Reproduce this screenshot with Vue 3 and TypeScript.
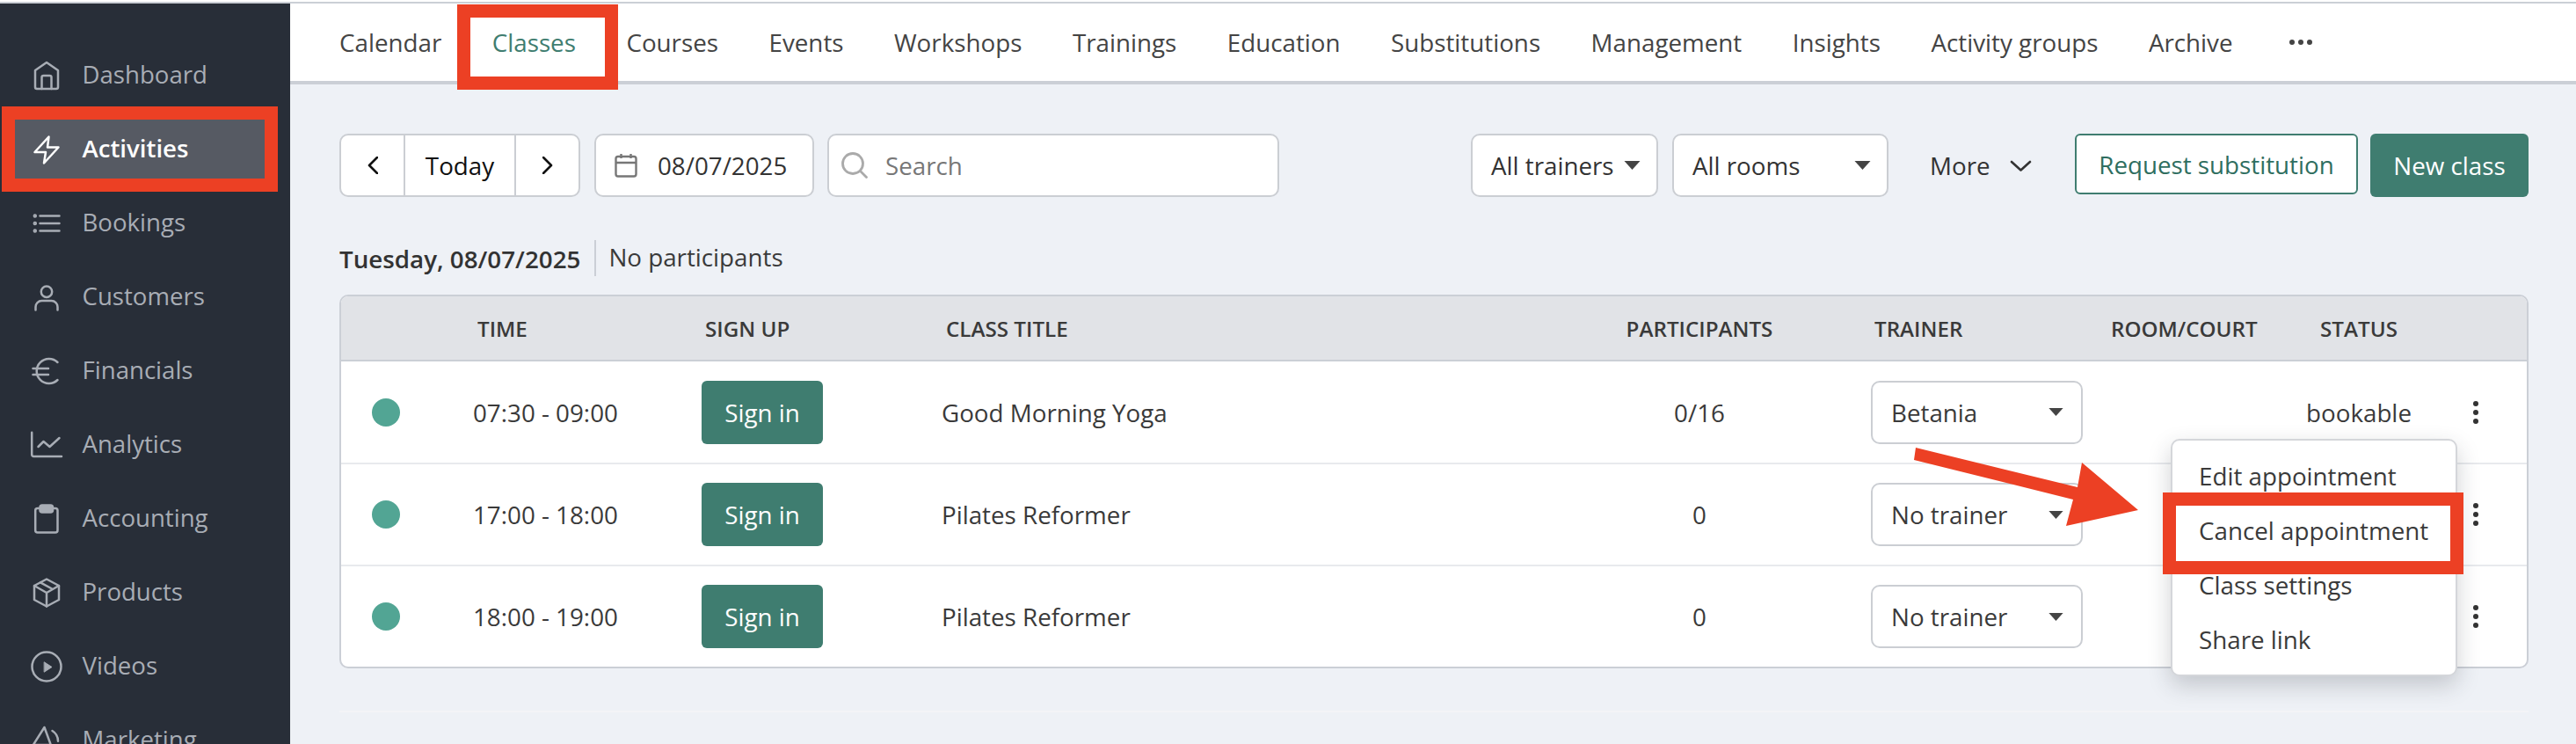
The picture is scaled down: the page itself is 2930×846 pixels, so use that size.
<script setup lang="ts">
interface SideItem { label: string; icon: string; active?: boolean }
interface ClassRow { time: string; title: string; count: string; trainer: string; status: string }

const sideItems: SideItem[] = [
  { label: 'Dashboard', icon: 'home' },
  { label: 'Activities', icon: 'bolt', active: true },
  { label: 'Bookings', icon: 'list' },
  { label: 'Customers', icon: 'user' },
  { label: 'Financials', icon: 'euro' },
  { label: 'Analytics', icon: 'chart' },
  { label: 'Accounting', icon: 'clip' },
  { label: 'Products', icon: 'box' },
  { label: 'Videos', icon: 'play' },
  { label: 'Marketing', icon: 'mega' },
]
const tabs: string[] = ['Calendar', 'Classes', 'Courses', 'Events', 'Workshops', 'Trainings', 'Education', 'Substitutions', 'Management', 'Insights', 'Activity groups', 'Archive']
const rows: ClassRow[] = [
  { time: '07:30 - 09:00', title: 'Good Morning Yoga', count: '0/16', trainer: 'Betania', status: 'bookable' },
  { time: '17:00 - 18:00', title: 'Pilates Reformer', count: '0', trainer: 'No trainer', status: '' },
  { time: '18:00 - 19:00', title: 'Pilates Reformer', count: '0', trainer: 'No trainer', status: '' },
]
const menu: string[] = ['Edit appointment', 'Cancel appointment', 'Class settings', 'Share link']
</script>

<template>
  <div class="page">
    <div class="topline"></div>
    <div class="shell">
      <aside class="sidebar">
        <div v-for="item in sideItems" :key="item.label" class="side-item" :class="{ active: item.active }">
          <svg class="side-icon" viewBox="0 0 40 40" fill="none" stroke="currentColor" stroke-width="2.5" stroke-linecap="round" stroke-linejoin="round">
            <template v-if="item.icon === 'home'">
              <path d="M7 14 L20 5 L33 14 V33 a2 2 0 0 1-2 2 H9 a2 2 0 0 1-2-2 Z" />
              <path d="M14.5 35 V22 a2 2 0 0 1 2-2 h7 a2 2 0 0 1 2 2 V35" />
            </template>
            <path v-else-if="item.icon === 'bolt'" d="M22.5 5.5 L6.5 23 H19 L17 35.5 L33.5 17.5 H21 Z" />
            <template v-else-if="item.icon === 'list'">
              <path d="M12.5 11.5 H34.5 M12.5 20 H34.5 M12.5 28.5 H34.5" />
              <circle cx="6.8" cy="11.5" r="1" /><circle cx="6.8" cy="20" r="1" /><circle cx="6.8" cy="28.5" r="1" />
            </template>
            <template v-else-if="item.icon === 'user'">
              <circle cx="20" cy="13.7" r="6.2" />
              <path d="M7.5 34.5 V31 a7 7 0 0 1 7-7 h11 a7 7 0 0 1 7 7 v3.5" />
            </template>
            <template v-else-if="item.icon === 'euro'">
              <path d="M32.5 10 A14 14 0 1 0 32.5 30" />
              <path d="M4.5 17 H22 M4.5 24 H22" />
            </template>
            <template v-else-if="item.icon === 'chart'">
              <path d="M3.2 5.7 V31 a2 2 0 0 0 2 2 H37" />
              <path d="M10.5 22 L16.5 16 L23.5 22 L34.5 12" />
            </template>
            <template v-else-if="item.icon === 'clip'">
              <rect x="7.2" y="8" width="25.3" height="27.5" rx="2.5" />
              <rect x="12.5" y="4.5" width="14.5" height="8" rx="2.5" fill="currentColor" />
            </template>
            <template v-else-if="item.icon === 'box'">
              <path d="M20 4.5 L34 12 V28 L20 35.5 L6 28 V12 Z" />
              <path d="M6 12 L20 20 L34 12 M20 20 V35.5 M13 8.3 L27 16" />
            </template>
            <template v-else-if="item.icon === 'play'">
              <circle cx="20" cy="20" r="16.5" />
              <path d="M17.5 15 L26 20.5 L17.5 26 Z" fill="currentColor" stroke-width="1" />
            </template>
            <template v-else>
              <path d="M17.5 5 L4.8 25 H24.8 Z" />
              <path d="M26.5 9 Q33 13 33 20.7" />
            </template>
          </svg>
          <span class="side-label">{{ item.label }}</span>
        </div>
      </aside>

      <main class="main">
        <nav class="tabs">
          <span v-for="t in tabs" :key="t" class="tab" :class="{ on: t === 'Classes' }">{{ t }}</span>
          <svg class="tab-more" viewBox="0 0 26 8" fill="#444">
            <circle cx="3" cy="4" r="3" /><circle cx="13" cy="4" r="3" /><circle cx="23" cy="4" r="3" />
          </svg>
        </nav>

        <section class="content">
          <div class="toolbar">
            <div class="box pager">
              <span class="pager-btn">
                <svg class="chev" viewBox="0 0 12 20" fill="none" stroke="#111" stroke-width="2.6" stroke-linecap="round" stroke-linejoin="round"><path d="M11 1 L2 10 L11 19" /></svg>
              </span>
              <span class="pager-today">Today</span>
              <span class="pager-btn">
                <svg class="chev" viewBox="0 0 12 20" fill="none" stroke="#111" stroke-width="2.6" stroke-linecap="round" stroke-linejoin="round"><path d="M1 1 L10 10 L1 19" /></svg>
              </span>
            </div>
            <div class="box date">
              <svg class="cal" viewBox="0 0 26 28" fill="none" stroke="#777" stroke-width="2.4" stroke-linejoin="round">
                <rect x="1.5" y="4" width="23" height="22.5" rx="2.5" />
                <path d="M1.5 11 H24.5 M7.5 1 V6 M18.5 1 V6" />
              </svg>
              <span>08/07/2025</span>
            </div>
            <div class="box search">
              <svg class="mag" viewBox="0 0 30 30" fill="none" stroke="#aaa" stroke-width="2.8" stroke-linecap="round">
                <circle cx="13" cy="13" r="11.5" /><path d="M21.5 21.5 L28.5 28.5" />
              </svg>
              <span>Search</span>
            </div>
            <div class="grow"></div>
            <div class="box select trainers">
              <span>All trainers</span>
              <svg class="caret" viewBox="0 0 18 10" fill="#444"><path d="M0 0 H18 L9 10 Z" /></svg>
            </div>
            <div class="box select rooms">
              <span>All rooms</span>
              <svg class="caret" viewBox="0 0 18 10" fill="#444"><path d="M0 0 H18 L9 10 Z" /></svg>
            </div>
            <div class="more">
              <span>More</span>
              <svg class="more-chev" viewBox="0 0 25 13" fill="none" stroke="#333" stroke-width="2.6" stroke-linecap="round" stroke-linejoin="round"><path d="M2 2 L12.5 11.5 L23 2" /></svg>
            </div>
            <button class="btn outline">Request substitution</button>
            <button class="btn solid new">New class</button>
          </div>

          <div class="day">
            <strong>Tuesday, 08/07/2025</strong>
            <span class="day-sep">No participants</span>
          </div>

          <div class="table">
            <div class="grid head">
              <span></span>
              <span class="h-time">TIME</span>
              <span class="h-sign">SIGN UP</span>
              <span class="h-title">CLASS TITLE</span>
              <span class="center">PARTICIPANTS</span>
              <span class="h-trainer">TRAINER</span>
              <span>ROOM/COURT</span>
              <span class="center">STATUS</span>
              <span></span>
            </div>
            <div v-for="r in rows" :key="r.time" class="grid row">
              <span class="dot"></span>
              <span class="c-time">{{ r.time }}</span>
              <span><button class="btn solid sign">Sign in</button></span>
              <span>{{ r.title }}</span>
              <span class="center">{{ r.count }}</span>
              <span class="c-trainer">
                <span class="box trainer-select">
                  <span>{{ r.trainer }}</span>
                  <svg class="caret small" viewBox="0 0 18 10" fill="#444"><path d="M0 0 H18 L9 10 Z" /></svg>
                </span>
              </span>
              <span></span>
              <span class="center">{{ r.status }}</span>
              <span class="kebab-cell">
                <svg class="kebab" viewBox="0 0 6 26" fill="#333">
                  <circle cx="3" cy="3" r="3" /><circle cx="3" cy="13" r="3" /><circle cx="3" cy="23" r="3" />
                </svg>
              </span>
            </div>
          </div>
          <div class="faint"></div>
        </section>
      </main>
    </div>

    <div class="menu">
      <div v-for="m in menu" :key="m" class="menu-item">{{ m }}</div>
    </div>

    <div class="mark mark-side"></div>
    <div class="mark mark-tab"></div>
    <div class="mark mark-menu"></div>
    <svg class="arrow" viewBox="0 0 270 100" fill="#ec4024">
      <path d="M9 0 L7 14 L188 59 L180 89 L262 71 L198 17 L193 45 Z" />
    </svg>
  </div>
</template>

<style>
html, body { margin: 0; padding: 0; background: #fff; }
</style>

<style scoped>
* { box-sizing: border-box; }
.page {
  position: relative;
  width: 2930px;
  height: 846px;
  overflow: hidden;
  padding-top: 2px;
  background: #fff;
  font-family: "Open Sans", "Noto Sans", sans-serif;
  font-size: 27.75px;
  color: #3a3a3a;
}
.topline { height: 2px; background: #cbcfd6; }
.shell { display: flex; height: 842px; }

.sidebar {
  flex: 0 0 330px;
  background: #282e38;
  color: #a8adb5;
  font-size: 27.6px;
  padding: 48px 29px 0 17px;
  display: flex;
  flex-direction: column;
  gap: 17px;
}
.side-item {
  flex: 0 0 67px;
  display: flex;
  align-items: center;
  padding-left: 16px;
  gap: 20.5px;
}
.side-item.active { background: #565a63; color: #fff; font-weight: 600; }
.side-icon { width: 40px; height: 40px; flex: none; }
.side-label { padding-bottom: 3px; }

.main { flex: 1; min-width: 0; background: #eef1f6; }
.tabs {
  height: 92px;
  background: #fff;
  border-bottom: 4px solid #cbcfd6;
  display: flex;
  align-items: center;
  padding: 0 0 0 56px;
  gap: 57.5px;
  color: #444;
}
.tab.on { color: #3f7d70; font-weight: 500; }
.tab-more { width: 26px; height: 8px; margin-left: 7px; }

.content { padding: 56px 54px 0 56px; }
.toolbar { display: flex; align-items: flex-start; }
.grow { flex: 1; }
.box {
  background: #fff;
  border: 2px solid #cbced3;
  border-radius: 10px;
  height: 72px;
  display: flex;
  align-items: center;
}
.pager { width: 274px; color: #111; }
.pager-btn { flex: 0 0 71px; display: flex; justify-content: center; }
.pager-today {
  flex: 1;
  height: 100%;
  display: flex;
  align-items: center;
  justify-content: center;
  border-left: 2px solid #cbced3;
  border-right: 2px solid #cbced3;
}
.chev { width: 12px; height: 20px; }
.date { width: 250px; margin-left: 16px; padding-left: 21px; gap: 23px; color: #333; }
.cal { width: 26px; height: 28px; flex: none; }
.search { width: 514px; margin-left: 15px; padding-left: 14px; gap: 20px; color: #777; }
.mag { width: 30px; height: 30px; flex: none; }
.select { justify-content: space-between; padding: 0 18px 0 21px; color: #333; }
.trainers { width: 213px; }
.rooms { width: 246px; margin-left: 16px; }
.caret { width: 19px; height: 10px; flex: none; }
.caret.small { width: 17px; height: 9px; }
.more {
  display: flex;
  align-items: center;
  height: 72px;
  margin-left: 47px;
  gap: 22px;
  width: 165px;
  color: #333;
}
.more-chev { width: 25px; height: 13px; }
.btn {
  font: inherit;
  border-radius: 6px;
  padding: 0;
  cursor: pointer;
}
.outline {
  width: 322px;
  height: 69px;
  background: #fff;
  border: 2px solid #3f7d70;
  color: #2f6e60;
}
.solid { background: #3f7d70; color: #fff; border: none; }
.new { width: 180px; height: 72px; margin-left: 14px; }

.day {
  display: flex;
  align-items: center;
  height: 41px;
  margin-top: 49px;
}
.day strong { font-weight: 600; color: #333; }
.day-sep { margin-left: 16px; padding-left: 14px; border-left: 2px solid #cbcfd6; height: 41px; line-height: 39px; }

.table {
  margin-top: 21px;
  background: #fff;
  border: 2px solid #cbcfd6;
  border-radius: 10px;
  overflow: hidden;
}
.grid {
  display: grid;
  grid-template-columns: 147px 263px 273px 759px 206px 365px 199px 166px 108px;
  align-items: center;
}
.head {
  height: 74px;
  background: #e1e3e7;
  border-bottom: 2px solid #cbcfd6;
  font-size: 24.2px;
  font-weight: 600;
  color: #3a3a3a;
}
.h-time { padding-left: 8px; }
.h-sign { padding-left: 4px; }
.h-title { padding-left: 5px; }
.h-trainer { padding-left: 96px; }
.center { text-align: center; }
.row { height: 116px; border-top: 2px solid #e8eaed; }
.head + .row { height: 115px; border-top: none; }
.dot { width: 32px; height: 32px; border-radius: 50%; background: #52a594; margin-left: 35px; }
.c-time { padding-left: 3px; }
.sign { width: 138px; height: 72px; display: block; }
.c-trainer { padding-left: 92px; }
.trainer-select { width: 241px; justify-content: space-between; padding: 0 20px 0 21px; color: #3a3a3a; }
.kebab-cell { display: flex; justify-content: center; padding-right: 8px; }
.kebab { width: 6px; height: 26px; }
.faint { height: 2px; margin-top: 48px; background: #f3f4f7; }

.menu {
  position: absolute;
  left: 2469px;
  top: 499px;
  width: 326px;
  height: 270px;
  padding-top: 10px;
  background: #fff;
  border: 2px solid #d4d6da;
  border-radius: 10px;
  box-shadow: 0 10px 26px rgba(40, 46, 56, 0.22);
}
.menu-item { height: 62px; line-height: 60px; padding-left: 30px; white-space: nowrap; }

.mark { position: absolute; border-style: solid; border-color: #ec4024; }
.mark-side { left: 2px; top: 121px; width: 314px; height: 97px; border-width: 15px; }
.mark-tab { left: 520px; top: 5px; width: 183px; height: 97px; border-width: 15px; }
.mark-menu { left: 2460px; top: 560px; width: 342px; height: 93px; border-width: 15px; }
.arrow { position: absolute; left: 2170px; top: 509px; width: 270px; height: 100px; }
</style>
